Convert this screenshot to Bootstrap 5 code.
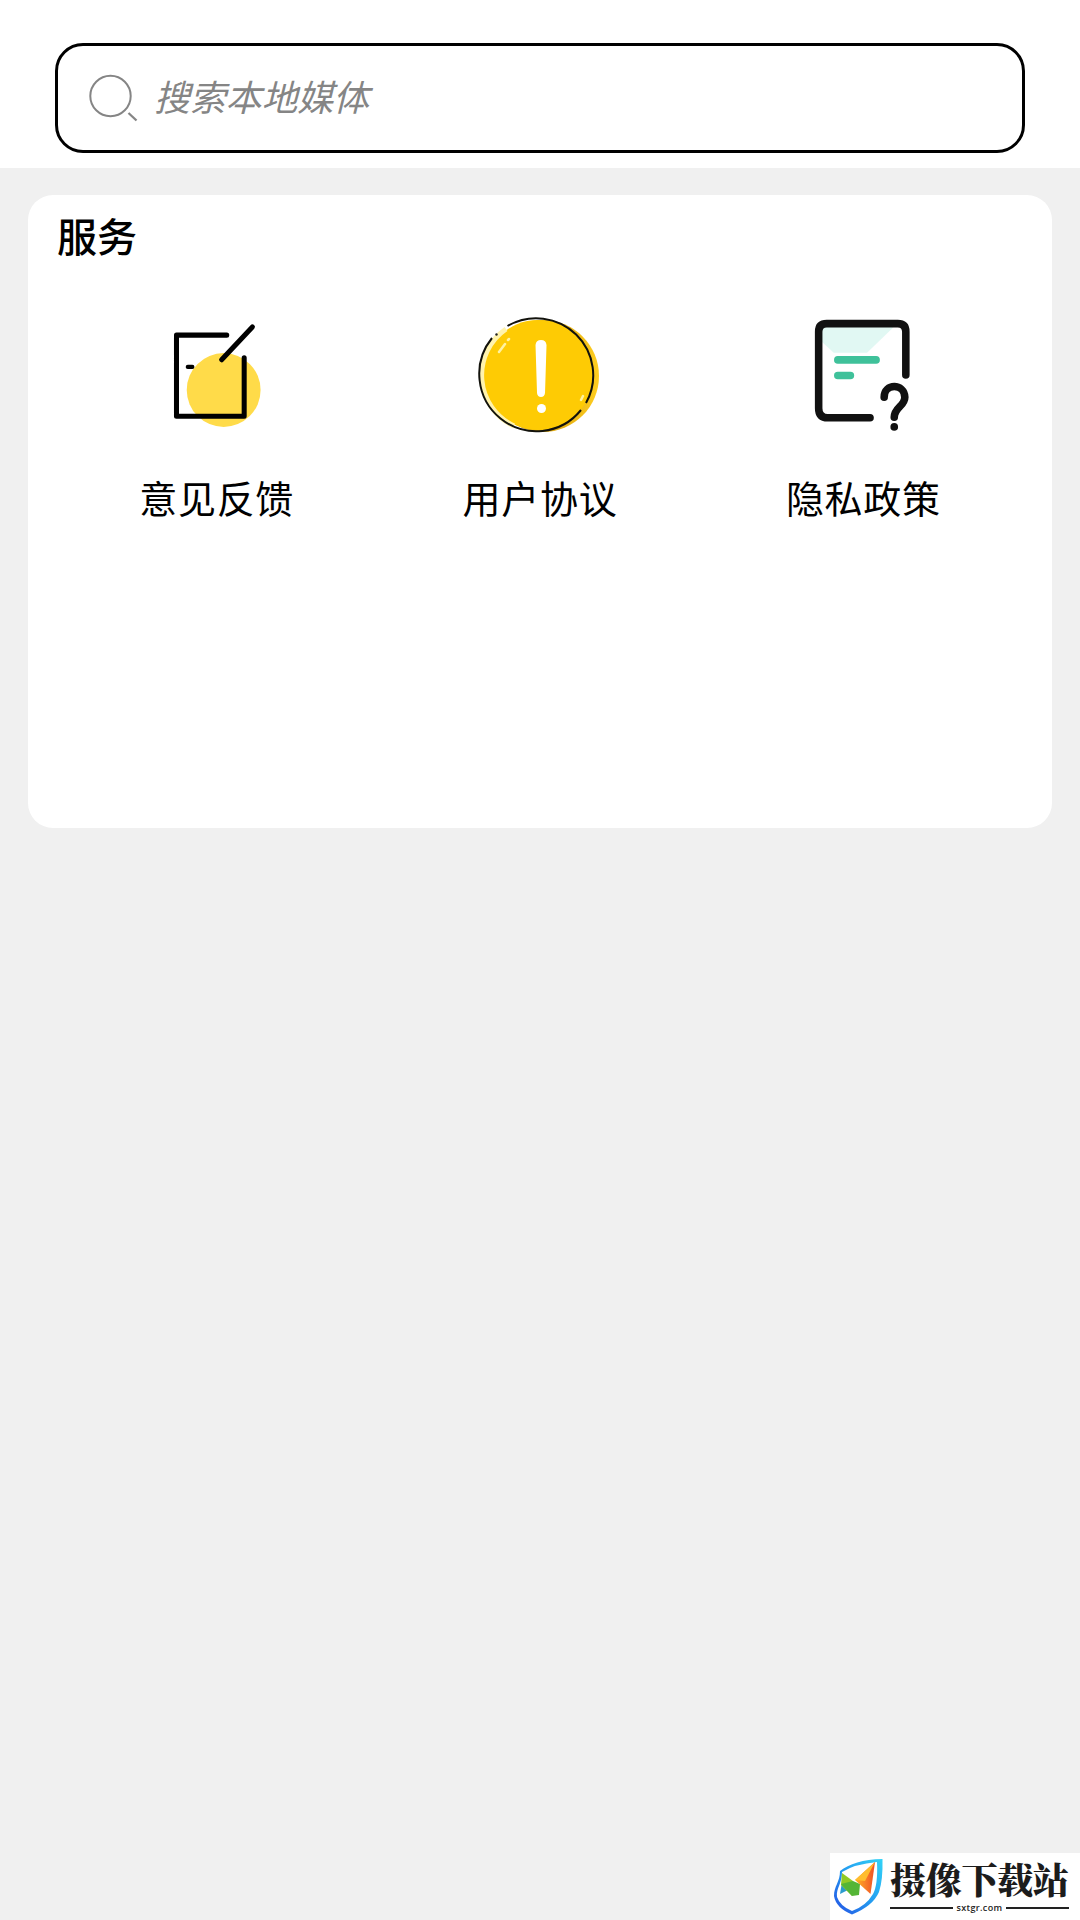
<!DOCTYPE html>
<html lang="zh-CN">
<head>
<meta charset="utf-8">
<meta name="viewport" content="width=device-width, initial-scale=1">
<title>服务</title>
<link href="https://cdn.jsdelivr.net/npm/bootstrap@5.3.0/dist/css/bootstrap.min.css" rel="stylesheet">
<style>
body{background:#f0f0f0;font-family:"Noto Sans CJK SC",sans-serif;color:#000;min-height:1920px;overflow:hidden}
svg{display:block;flex:none}
.top-bar{height:168px;padding:43px 55px 0}
.search-box{height:110px;border:3px solid #000;border-radius:28px;padding:0 0 0 30px}
.search-hint{font-size:36px;line-height:54px;font-style:italic;color:#858585;letter-spacing:-.2px;margin-left:16px;margin-top:-6px}
.service-card{margin:27px 28px 0;height:633px;border-radius:25px;padding:10px 27px}
.service-title{font-size:40px;line-height:60px;font-weight:500;margin:0 0 0 2px}
.service-label{font-size:38px;line-height:56px;letter-spacing:.7px;margin-top:29px}
.service-list{margin-top:45px}
.site-mark{width:250px;height:67px;right:0;bottom:0}
.site-name{font-size:36px;line-height:40px;font-weight:900;letter-spacing:-.3px;color:#1c1c1c;font-family:"Noto Serif CJK SC","Noto Sans CJK SC",serif}
.site-url{font-family:"Open Sans",sans-serif;font-size:9px;line-height:10px;font-weight:600;letter-spacing:.35px;color:#222}
.site-rule{height:2px;background:#222}
.site-words{width:179px;margin-left:6px;padding-top:6px}
</style>
</head>
<body>
<header class="top-bar bg-white">
  <div class="search-box d-flex align-items-center">
    <svg width="50" height="50" viewBox="0 -1 50 50" fill="none" stroke="#858585" stroke-width="2"><circle cx="22.5" cy="22" r="20.2"/><path d="M40.5 39l8 7.5" stroke-width="2.3"/></svg>
    <span class="search-hint">搜索本地媒体</span>
  </div>
</header>
<main class="service-card bg-white">
  <h1 class="service-title">服务</h1>
  <div class="service-list row g-0 text-center">
    <div class="col-4 d-flex flex-column align-items-center">
      <svg width="120" height="130" viewBox="-1 1.500 117 126.750" fill="none" stroke="#000" stroke-width="4.9" stroke-linecap="round" stroke-linejoin="round"><circle cx="64" cy="79.500" r="36" fill="#ffdb49" stroke="none"/><path d="M67 26H18V105H84V48M62 50L92 18"/><path d="M29 57h4.500" stroke-width="4"/></svg>
      <div class="service-label">意见反馈</div>
    </div>
    <div class="col-4 d-flex flex-column align-items-center">
      <svg width="150" height="130" viewBox="0 5 150 130" fill="none"><defs><linearGradient id="coin-edge"><stop offset=".65" stop-color="#e2ac12"/><stop offset="1" stop-color="#ffce20"/></linearGradient></defs><circle cx="78" cy="71" r="56" fill="url(#coin-edge)"/><circle cx="73" cy="70" r="55" fill="#fecb04"/><path d="M41 24A56 56 0 0 0 49 121" stroke="#fff3ad" stroke-width="5"/><path d="M42.500 21A57 57 0 0 1 121 98M116 105A57 57 0 0 1 27 33" stroke="#12120c" stroke-width="2"/><circle cx="31.500" cy="29.500" r="1.200" fill="#222"/><path d="M34 47l6-8M43 35l1-1M116 95l2-4" stroke="#fff2a1" stroke-width="2.500" stroke-linecap="round"/><path d="M70.500 40Q71 35 76 35T81.500 40L80 88Q79.500 92 76 92T72 88Z" fill="#fff"/><circle cx="76.500" cy="103.500" r="4.500" fill="#fff"/></svg>
      <div class="service-label">用户协议</div>
    </div>
    <div class="col-4 d-flex flex-column align-items-center">
      <svg width="120" height="130" viewBox="3.500 .5 119 129" fill="none" stroke="#111" stroke-width="7.500" stroke-linecap="round" stroke-linejoin="round"><path d="M20 15H96L67 43H34L20 30Z" fill="#e1f8f3" stroke="none"/><path d="M105.500 65V22Q105.500 14 97.500 14H27Q19 14 19 22V98Q19 107.500 28 107.500H70"/><path d="M38 50H76M38 65.500H50.500" stroke="#3fc19a"/><path d="M84 87C84 73 104 73 104.500 87C104.500 96 94 97 94 107"/><circle cx="94" cy="116.500" r="3.800" fill="#111" stroke="none"/></svg>
      <div class="service-label">隐私政策</div>
    </div>
  </div>
</main>
<div class="site-mark position-absolute bg-white d-flex">
  <svg width="54" height="67" viewBox="0 0 54 67"><defs><linearGradient id="shield-line" x1="1" y1="0" x2="0" y2="1"><stop stop-color="#32d3f7"/><stop offset=".5" stop-color="#249cf0"/><stop offset="1" stop-color="#2450e4"/></linearGradient><linearGradient id="wing" x1="0" x2="1"><stop stop-color="#ffb51c"/><stop offset=".5" stop-color="#f98228"/><stop offset="1" stop-color="#ee4d24"/></linearGradient></defs><path fill="url(#shield-line)" fill-rule="evenodd" d="M52.500 6C33 6 19 11 10 18C10 29 4 33 4 43Q6 55 22 61.500Q43 53 49 39Q53 27 52.500 6ZM47 9Q48 32 43 41Q36 53 22 58Q10 53 7 44C6 35 12 31 12 19Q25 11 47 9Z"/><path fill="#2b9bce" d="M12 29L10 41L18 37Z"/><path fill="#92ca27" d="M12 20L23 28L22 43L11 32Z"/><path fill="#54b536" d="M11 31L23 28L30 31L29 42L22 43Z"/><path fill="url(#wing)" d="M45 9L40.500 41L25 27Z"/><path fill="#ffbd2e" d="M45 9L25 27L35 28Z"/></svg>
  <div class="site-words">
    <div class="site-name text-nowrap">摄像下载站</div>
    <div class="d-flex align-items-center mt-1"><span class="site-rule flex-fill me-1"></span><span class="site-url">sxtgr.com</span><span class="site-rule flex-fill ms-1"></span></div>
  </div>
</div>
<script src="https://cdn.jsdelivr.net/npm/bootstrap@5.3.0/dist/js/bootstrap.bundle.min.js"></script>
</body>
</html>
